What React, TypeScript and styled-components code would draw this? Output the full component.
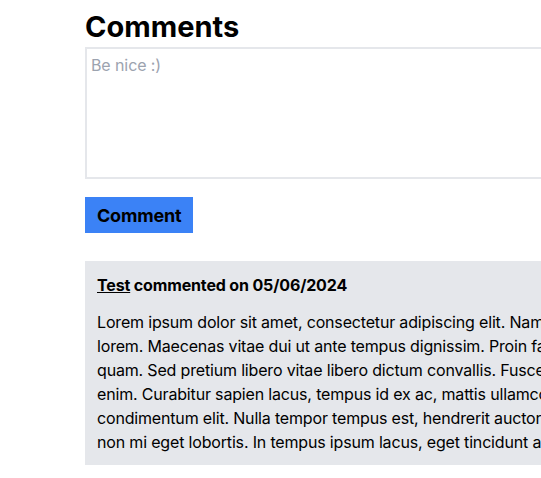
import React from "react";
import styled, { createGlobalStyle } from "styled-components";

const GlobalStyle = createGlobalStyle`
  html, body {
    margin: 0;
    padding: 0;
    background: #ffffff;
    overflow: hidden;
  }
  body {
    font-family: Inter, "Noto Sans", sans-serif;
    color: #000000;
  }
`;

const Section = styled.section`
  width: 720px;
  margin-left: 85px;
  padding-top: 7px;
  display: flex;
  flex-direction: column;
`;

const Title = styled.h2`
  margin: 0;
  font-size: 29px;
  line-height: 40px;
  font-weight: 700;
`;

const Form = styled.form`
  display: flex;
  flex-direction: column;
  align-items: flex-start;
  gap: 18px;
`;

const TextArea = styled.textarea`
  box-sizing: border-box;
  width: 100%;
  height: 132px;
  border: 2px solid #e5e7eb;
  padding: 4px;
  margin: 0;
  resize: none;
  font-family: inherit;
  font-size: 16px;
  line-height: 24px;
  letter-spacing: -0.1px;
  outline: none;

  &::placeholder {
    color: #9ca3af;
  }
`;

const Button = styled.button`
  background: #3b82f6;
  border: none;
  margin: 0;
  padding: 5px 12px 3px;
  font-family: inherit;
  font-size: 18px;
  line-height: 28px;
  font-weight: 700;
  letter-spacing: -0.2px;
  color: #000000;
  cursor: pointer;
`;

const CommentList = styled.div`
  margin-top: 28px;
  display: flex;
  flex-direction: column;
`;

const Card = styled.article`
  background: #e5e7eb;
  padding: 12px 12px 11px;
`;

const CardHeader = styled.p`
  margin: 0 0 13px;
  font-size: 16px;
  line-height: 24px;
  font-weight: 700;
  letter-spacing: -0.15px;
`;

const Author = styled.a`
  color: inherit;
  text-decoration: underline;
`;

const CardBody = styled.p`
  margin: 0;
  font-size: 16px;
  line-height: 24px;
  letter-spacing: -0.17px;
  white-space: pre-line;
`;

const lorem = `Lorem ipsum dolor sit amet, consectetur adipiscing elit. Nam eget justo at
lorem. Maecenas vitae dui ut ante tempus dignissim. Proin facilisis auctor
quam. Sed pretium libero vitae libero dictum convallis. Fusce vel tincidunt
enim. Curabitur sapien lacus, tempus id ex ac, mattis ullamcorper nibh in
condimentum elit. Nulla tempor tempus est, hendrerit auctor erat vehicula
non mi eget lobortis. In tempus ipsum lacus, eget tincidunt augue feugiat.`;

export default function App() {
  return (
    <>
      <GlobalStyle />
      <Section>
        <Title>Comments</Title>
        <Form onSubmit={(e) => e.preventDefault()}>
          <TextArea placeholder="Be nice :)" />
          <Button type="submit">Comment</Button>
        </Form>
        <CommentList>
          <Card>
            <CardHeader>
              <Author href="#">Test</Author> commented on 05/06/2024
            </CardHeader>
            <CardBody>{lorem}</CardBody>
          </Card>
        </CommentList>
      </Section>
    </>
  );
}
